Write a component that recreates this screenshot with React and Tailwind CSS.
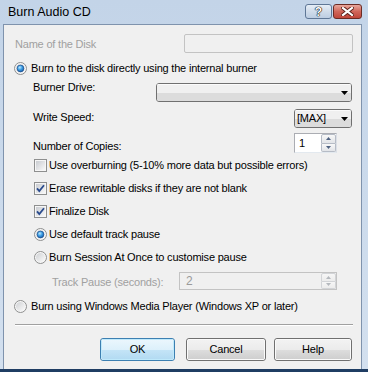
import React from "react";

function Radio({ checked }) {
  return (
    <svg width="13" height="13" viewBox="0 0 13 13" className="shrink-0 block">
      <defs>
        <linearGradient id="rbg" x1="0" y1="0" x2="1" y2="1">
          <stop offset="0" stopColor="#cfd1d4" />
          <stop offset="1" stopColor="#fbfbfb" />
        </linearGradient>
        <radialGradient id="rdot" cx="0.4" cy="0.35" r="0.75">
          <stop offset="0" stopColor="#bfe8fc" />
          <stop offset="0.45" stopColor="#3c9fe6" />
          <stop offset="1" stopColor="#0f4a98" />
        </radialGradient>
      </defs>
      <circle cx="6.5" cy="6.5" r="6" fill="#f6f6f6" stroke="#8e8f8f" />
      <circle cx="6.5" cy="6.5" r="4.5" fill="url(#rbg)" />
      {checked && <circle cx="6.5" cy="6.5" r="3.4" fill="url(#rdot)" stroke="#1d4f8c" strokeWidth="0.7" />}
    </svg>
  );
}

function Check({ checked }) {
  return (
    <svg width="13" height="13" viewBox="0 0 13 13" className="shrink-0 block">
      <defs>
        <linearGradient id="cbg" x1="0" y1="0" x2="1" y2="1">
          <stop offset="0" stopColor="#c9ccd1" />
          <stop offset="1" stopColor="#f8f8f8" />
        </linearGradient>
      </defs>
      <rect x="0.5" y="0.5" width="12" height="12" fill="#f6f6f6" stroke="#8e8f8f" />
      <rect x="2" y="2" width="9" height="9" fill="url(#cbg)" />
      {checked && (
        <path d="M3 6.3 L5.3 9 L10 3.2" fill="none" stroke="#2a4b8d" strokeWidth="1.8" strokeLinejoin="miter" />
      )}
    </svg>
  );
}

function Arrow() {
  return (
    <svg width="7" height="4" viewBox="0 0 7 4" className="block">
      <polygon points="0,0 7,0 3.5,4" fill="#000" />
    </svg>
  );
}

function Select({ w, children }) {
  return (
    <div
      className={`${w} h-[19px] rounded-[3px] border border-[#707070] relative overflow-hidden flex items-center`}
    >
      <div className="absolute inset-0 flex flex-col">
        <div className="h-1/2 bg-[#f0f0f0] border-t border-[#fbfbfb]" />
        <div className="h-1/2 bg-[#dcdcdc]" />
      </div>
      <div className="relative flex-1 pl-[2px] text-black">{children}</div>
      <div className="relative pr-[3px] pl-[2px]">
        <Arrow />
      </div>
    </div>
  );
}

function Spin({ disabled }) {
  const arrow = disabled ? "#b4b8bd" : "#4e6180";
  const box = disabled
    ? "border-[#d2d4d7] from-[#f6f6f6] to-[#ececec]"
    : "border-[#b6bcc6] from-[#f8f8f8] to-[#e2e4e8]";
  return (
    <div className="flex flex-col w-[15px] h-full">
      <div className={`flex-1 border rounded-t-[2px] bg-gradient-to-b ${box} flex items-center justify-center`}>
        <svg width="5" height="3" viewBox="0 0 5 3" className="block">
          <polygon points="0,3 5,3 2.5,0" fill={arrow} />
        </svg>
      </div>
      <div className={`flex-1 border border-t-0 rounded-b-[2px] bg-gradient-to-b ${box} flex items-center justify-center`}>
        <svg width="5" height="3" viewBox="0 0 5 3" className="block">
          <polygon points="0,0 5,0 2.5,3" fill={arrow} />
        </svg>
      </div>
    </div>
  );
}

function Button({ w, def, children }) {
  return (
    <div
      className={`${w} h-[23px] rounded-[3px] border ${
        def ? "border-[#3c7fb1]" : "border-[#707070]"
      } relative overflow-hidden flex items-center justify-center`}
    >
      <div
        className={`absolute inset-0 flex flex-col border ${
          def ? "border-[#bfe9fb]" : "border-[#fafafa]"
        } rounded-[2px]`}
      >
        <div
          className={`h-1/2 bg-gradient-to-b ${
            def ? "from-[#eaf6fd] to-[#dcf0fb]" : "from-[#f2f2f2] to-[#ebebeb]"
          }`}
        />
        <div
          className={`h-1/2 bg-gradient-to-b ${
            def ? "from-[#c4e4f7] to-[#b3dbf2]" : "from-[#dddddd] to-[#cfcfcf]"
          }`}
        />
      </div>
      <span className="relative text-black">{children}</span>
    </div>
  );
}

export default function App() {
  return (
    <div className="w-[368px] h-[372px] flex flex-col bg-gradient-to-b from-[#c3d4e8] to-[#d3e0ef] font-['Liberation_Sans',Arial,sans-serif] text-[11px] leading-[13px] tracking-[-0.2px] text-black overflow-hidden">
      {/* Title bar */}
      <div className="h-[24px] flex items-start shrink-0">
        <div className="pt-[5px] pl-[8px] text-[12.5px] leading-[15px] tracking-normal">Burn Audio CD</div>
        <div className="ml-auto mt-[4px] mr-[6px] flex gap-[1px]">
          <div className="w-[27px] h-[15px] rounded-[3px] border border-[#5f7796] bg-gradient-to-b from-[#e6eef7] via-[#d0dcea] to-[#bccde2] flex items-center justify-center">
            <span className="text-[12px] leading-[12px] font-bold text-white tracking-normal [text-shadow:0_0_1px_#000,0_0_1px_#000,0_0_1px_#000]">
              ?
            </span>
          </div>
          <div className="w-[29px] h-[15px] rounded-[3px] border border-[#6b2b24] bg-gradient-to-b from-[#e8a79c] via-[#d0665a] to-[#c0463a] flex items-center justify-center">
            <svg width="13" height="9" viewBox="0 0 13 9" className="block">
              <path d="M2 1 L11 8 M11 1 L2 8" stroke="#5a2019" strokeWidth="4" strokeLinecap="square" />
              <path d="M2 1 L11 8 M11 1 L2 8" stroke="#ffffff" strokeWidth="2.2" strokeLinecap="square" />
            </svg>
          </div>
        </div>
      </div>

      {/* Client area */}
      <div className="ml-[3px] mr-[6px] h-[345px] shrink-0 border-l border-r border-t border-[#7f93ad] bg-[#f0f0f0] pl-[10px] pr-[8px] flex flex-col">
        {/* Name of the disk */}
        <div className="mt-[9px] h-[19px] flex items-start justify-between">
          <span className="mt-[4px] ml-[1px] text-[#a0a0a0]">Name of the Disk</span>
          <div className="w-[169px] h-[19px] rounded-[2px] border border-[#c3c3c3] bg-[#f0f0f0]" />
        </div>

        {/* Radio 1 */}
        <div className="mt-[8px] h-[14px] flex items-center gap-[4px]">
          <Radio checked />
          <span>Burn to the disk directly using the internal burner</span>
        </div>

        {/* Burner drive */}
        <div className="mt-[6px] h-[21px] flex items-start justify-between">
          <span className="ml-[19px]">Burner Drive:</span>
          <div className="mt-[2px] mr-[1px]">
            <Select w="w-[196px]" />
          </div>
        </div>

        {/* Write speed */}
        <div className="mt-[7px] h-[19px] flex items-start justify-between">
          <span className="ml-[19px] mt-[2px]">Write Speed:</span>
          <div className="mr-[1px]">
            <Select w="w-[58px]">[MAX]</Select>
          </div>
        </div>

        {/* Copies */}
        <div className="mt-[5px] h-[20px] flex items-start">
          <span className="ml-[19px] mt-[7px]">Number of Copies:</span>
          <div className="ml-auto mr-[16px] w-[43px] h-[20px] border border-[#abadb3] border-r-[#dbdfe6] border-b-[#e3e9ef] bg-white flex">
            <span className="flex-1 pl-[4px] pt-[3px]">1</span>
            <Spin />
          </div>
        </div>

        {/* Checkboxes */}
        <div className="mt-[5px] h-[14px] flex items-center gap-[2px] ml-[20px]">
          <Check />
          <span>Use overburning (5-10% more data but possible errors)</span>
        </div>
        <div className="mt-[9px] h-[14px] flex items-center gap-[2px] ml-[20px]">
          <Check checked />
          <span>Erase rewritable disks if they are not blank</span>
        </div>
        <div className="mt-[9px] h-[14px] flex items-center gap-[2px] ml-[20px]">
          <Check checked />
          <span>Finalize Disk</span>
        </div>

        {/* Pause radios */}
        <div className="mt-[9px] h-[14px] flex items-center gap-[2px] ml-[20px]">
          <Radio checked />
          <span>Use default track pause</span>
        </div>
        <div className="mt-[9px] h-[14px] flex items-center gap-[2px] ml-[20px]">
          <Radio />
          <span>Burn Session At Once to customise pause</span>
        </div>

        {/* Track pause */}
        <div className="mt-[8px] h-[18px] flex items-start">
          <span className="ml-[38px] mt-[4px] text-[#a0a0a0]">Track Pause (seconds):</span>
          <div className="ml-auto mr-[16px] w-[158px] h-[18px] border border-[#c3c3c3] bg-[#f0f0f0] flex">
            <span className="flex-1 pl-[6px] pt-[2px] text-[#9a9a9a] text-[12px] leading-[13px]">2</span>
            <Spin disabled />
          </div>
        </div>

        {/* WMP radio */}
        <div className="mt-[9px] h-[14px] flex items-center gap-[4px]">
          <Radio />
          <span>Burn using Windows Media Player (Windows XP or later)</span>
        </div>

        {/* Separator */}
        <div className="mt-[11px] ml-[1px] h-[2px] border-t border-[#a0a0a0] border-b border-b-white" />

        {/* Buttons */}
        <div className="mt-[12px] flex">
          <div className="ml-[86px]">
            <Button w="w-[75px]" def>
              OK
            </Button>
          </div>
          <div className="ml-[11px]">
            <Button w="w-[80px]">Cancel</Button>
          </div>
          <div className="ml-[8px]">
            <Button w="w-[78px]">Help</Button>
          </div>
        </div>
      </div>

      {/* Bottom frame */}
      <div className="h-[3px] shrink-0 bg-[#1f3d63]" />
    </div>
  );
}
